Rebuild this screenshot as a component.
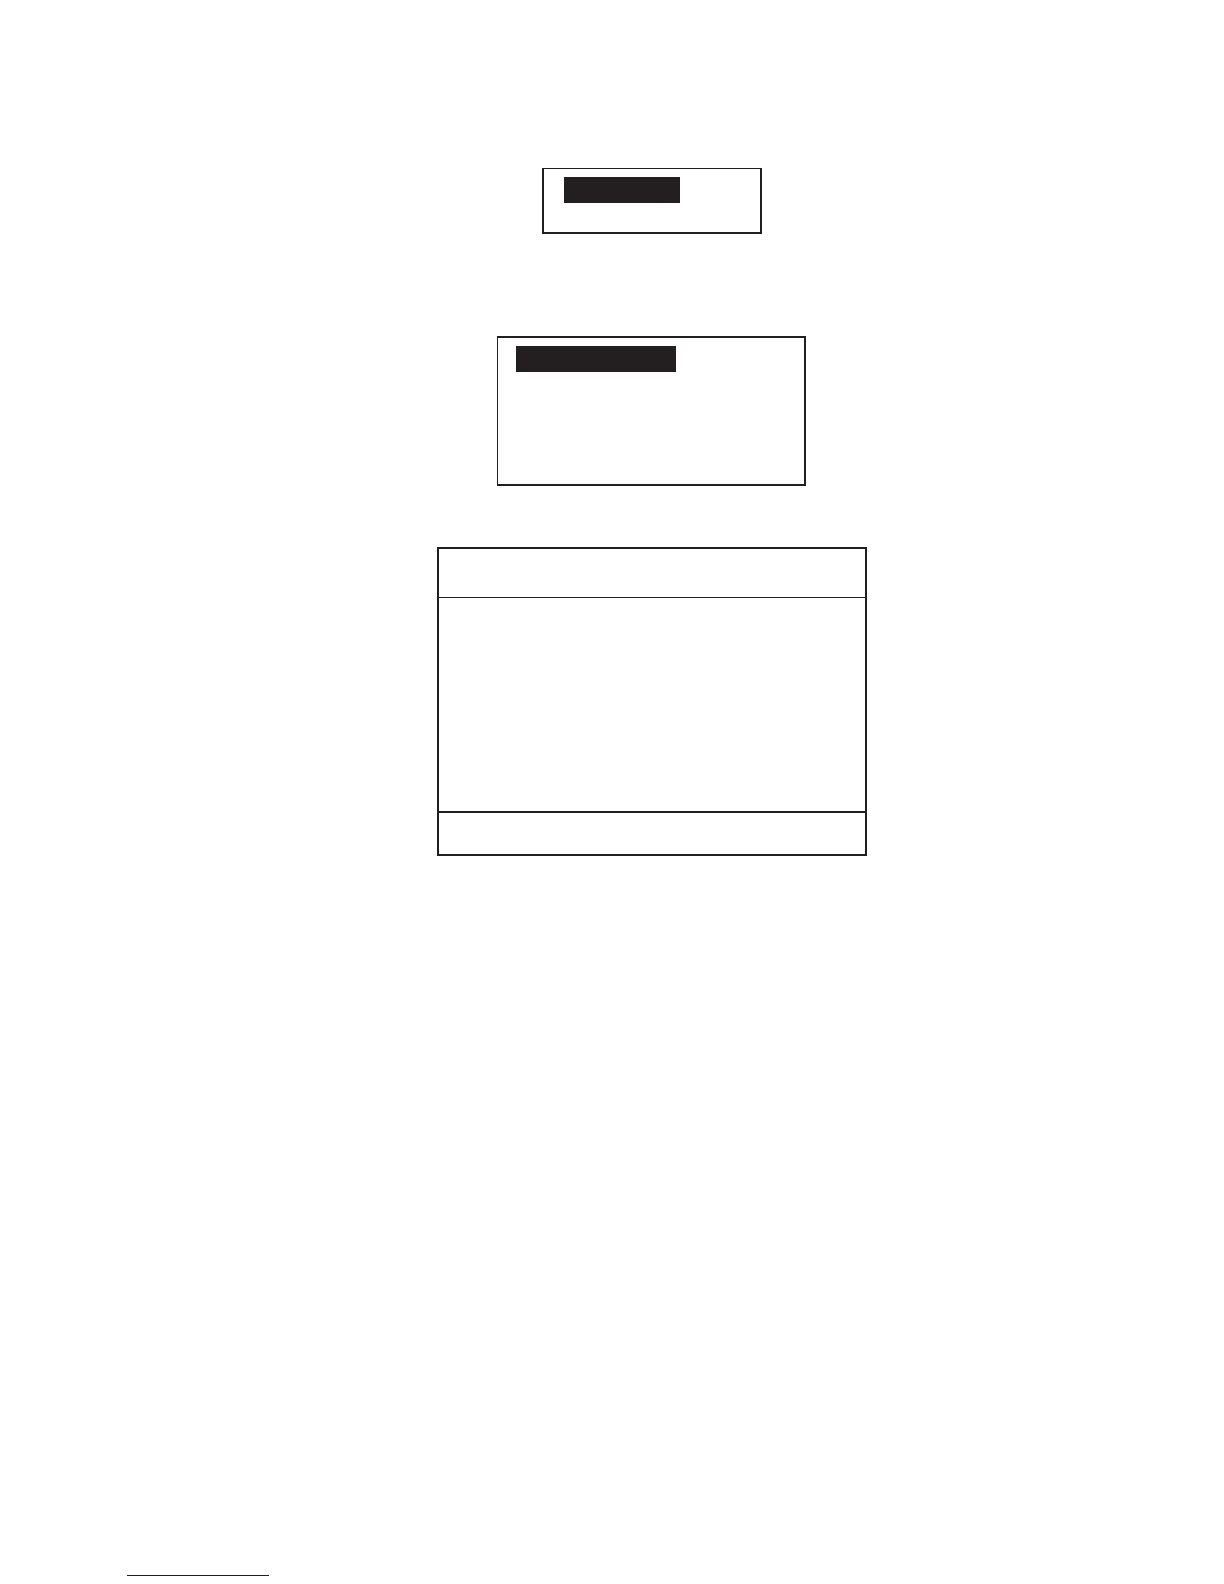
<main class="page">
  <section class="figures">
    <div class="panel small">
      <div class="highlight"></div>
    </div>

    <div class="panel medium">
      <div class="highlight"></div>
    </div>

    <div class="panel large">
      <div class="head"></div>
      <div class="body"></div>
      <div class="foot"></div>
    </div>
  </section>

  <footer>
    <a class="rule" href="#top" aria-label="Back to top"></a>
  </footer>
</main>

<style>
  :global(body) {
    margin: 0;
    background: #fff;
  }

  .page {
    --ink: #231f20;
    box-sizing: border-box;
    min-height: 100vh;
    display: flex;
    flex-direction: column;
    justify-content: space-between;
    padding: 168px 0 8px;
    font-family: "Liberation Sans", sans-serif;
  }

  .figures {
    display: flex;
    flex-direction: column;
    align-items: center;
    padding-left: 79px;
  }

  .panel {
    box-sizing: border-box;
    max-width: 100%;
    border: 2px solid var(--ink);
  }

  .highlight {
    height: 26px;
    background: var(--ink);
  }

  .small {
    width: 220px;
    min-height: 66px;
    padding: 8px 80px 0 20px;
    border-top-width: 1px;
  }

  .medium {
    width: 309px;
    min-height: 150px;
    margin-top: 102px;
    padding: 8px 128px 0 18px;
    border-left-width: 1px;
  }

  .large {
    width: 430px;
    margin-top: 61px;
  }

  .head {
    height: 48px;
    border-bottom: 1px solid var(--ink);
  }

  .body {
    height: 213px;
    border-bottom: 2px solid var(--ink);
  }

  .foot {
    height: 41px;
  }

  footer {
    padding-left: 127px;
  }

  .rule {
    display: block;
    width: 142px;
    height: 16px;
    border-bottom: 1px solid #1010a0;
  }
</style>
